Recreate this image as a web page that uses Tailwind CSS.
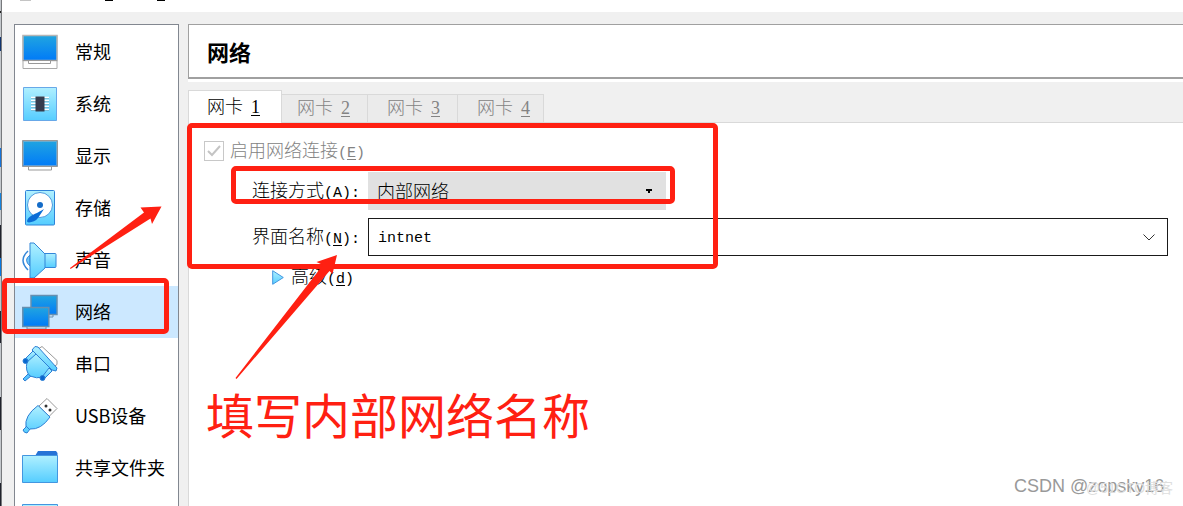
<!DOCTYPE html>
<html lang="zh-CN">
<head>
    <meta charset="UTF-8">
    <meta name="viewport" content="width=device-width, initial-scale=1.0">
    <title>网络</title>
    <script src="https://cdn.jsdelivr.net/npm/@tailwindcss/browser@4"></script>
</head>
<body class="relative h-screen overflow-hidden bg-[#f0f0f0] font-['Noto_Sans_CJK_SC',sans-serif] text-lg text-black">
    <svg class="absolute size-0" aria-hidden="true">
        <defs>
            <linearGradient id="screen" x1="0" y1="0" x2="0" y2="1"><stop offset="0" stop-color="#21a5e0"/><stop offset="1" stop-color="#007af8"/></linearGradient>
            <linearGradient id="light" x1="0" y1="0" x2="0" y2="1"><stop offset="0" stop-color="#b0f0ff"/><stop offset="1" stop-color="#55cdff"/></linearGradient>
        </defs>
    </svg>

    <div class="flex h-full">
        <!-- Desktop behind the window -->
        <div class="flex w-[2px] shrink-0 flex-col border-r border-[#77797c] bg-[#c4c8cc]">
            <div class="mt-[11px] h-[2px] bg-[#222]"></div>
            <div class="mt-[24px] h-[14px] bg-[#12356f]"></div>
            <div class="mt-[97px] h-[19px] bg-[#1673d8]"></div>
            <div class="mt-[26px] h-[17px] bg-[#1683dc]"></div>
            <div class="mt-[15px] h-[33px] bg-[#20222c]"></div>
            <div class="h-[18px] bg-[#0878e0]"></div>
            <div class="mt-[35px] h-[32px] bg-[#20222c]"></div>
            <div class="mt-[54px] h-[33px] bg-[#20222c]"></div>
            <div class="mt-[53px] grow bg-[#20222c]"></div>
        </div>

        <div class="flex min-w-0 flex-1 flex-col">
            <!-- Title bar -->
            <header class="flex h-[12px] shrink-0 items-start bg-white">
                <div class="ml-[18px] h-px w-[11px] bg-[#c4c4c4]"></div>
                <div class="ml-[74px] h-px w-[8px] bg-black"></div>
                <div class="ml-[44px] h-px w-[8px] bg-black"></div>
            </header>

            <div class="flex min-h-0 flex-1 pt-[12px] pl-[12px]">
                <!-- Categories -->
                <nav class="w-[165px] shrink-0 overflow-hidden border border-b-0 border-[#828790] bg-white pt-px">
                    <a href="#" class="flex h-[52px] items-center gap-[17px] pl-[7px]">
                        <svg class="size-[36px] shrink-0" viewBox="0 0 36 36"><path d="M1 1.500h34v33H1z" fill="#fff" stroke="#aaa"/><path d="M1 1.500h34v25H1z" fill="url(#screen)" stroke="#b5b5b5" stroke-width="1.500"/><path d="M1 26.500h34M6.500 27v2.500h22V27" fill="#fff" stroke="#999"/></svg>
                        <span class="pb-[3px]">常规</span>
                    </a>
                    <a href="#" class="flex h-[52px] items-center gap-[17px] pl-[7px]">
                        <svg class="size-[36px] shrink-0" viewBox="0 0 36 36"><path d="M1.500 1.500h33v33h-33z" fill="url(#light)" stroke="#68a8e8"/><path d="M9 11.500h18M9 14.500h18M9 17.500h18M9 20.500h18M9 23.500h18" stroke="#fff" stroke-width="1.500"/><path d="M9 12.500h18M9 15.500h18M9 18.500h18M9 21.500h18M9 24.500h18" stroke="#68a5bb" stroke-width=".6"/><path d="M13.500 10.500h9v15h-9z" fill="#353c4d"/></svg>
                        <span class="pb-[3px]">系统</span>
                    </a>
                    <a href="#" class="flex h-[52px] items-center gap-[17px] pl-[7px]">
                        <svg class="size-[36px] shrink-0" viewBox="0 0 36 36"><path d="M6.500 28.500v3.500h23v-3.500" fill="#fff" stroke="#999"/><path d="M.5 2.500h35v26H.5z" fill="url(#screen)" stroke="#999"/><path d="M1.500 3.500h33v24h-33z" fill="none" stroke="#9ab4c4" stroke-width=".6"/></svg>
                        <span class="pb-[3px]">显示</span>
                    </a>
                    <a href="#" class="flex h-[52px] items-center gap-[17px] pl-[7px]">
                        <svg class="size-[36px] shrink-0" viewBox="0 0 36 36"><rect x="3.500" y=".5" width="29" height="34.500" rx="1" fill="url(#light)" stroke="#2d83d8"/><circle cx="18" cy="15" r="12.500" fill="#fff" stroke="#4d9ade"/><path d="M22 19 16 28c-2 3-6 4-9 4.500-3 0-2-3 0-5 3-3 8-4 15-8.500z" fill="#0b6dd6"/><circle cx="18" cy="15" r="3" fill="#146cc8"/></svg>
                        <span class="pb-[3px]">存储</span>
                    </a>
                    <a href="#" class="flex h-[52px] items-center gap-[17px] pl-[7px]">
                        <svg class="size-[36px] shrink-0" viewBox="0 0 36 36" stroke="#3386d8"><path d="M6 9q-10 9 0 19" fill="none" stroke-width="1.500"/><path d="M8 13q-7 5 0 11z" fill="#6fc6f8"/><path d="M22 11.500h11q1 0 1 1v12q0 1-1 1H22z" fill="url(#light)"/><path d="M8 1h4l11 11v14L12 36H8z" fill="url(#light)"/></svg>
                        <span class="pb-[3px]">声音</span>
                    </a>
                    <a href="#" class="flex h-[52px] items-center gap-[17px] bg-[#cce8ff] pl-[7px]" aria-current="page">
                        <svg class="size-[36px] shrink-0" viewBox="0 0 36 36" stroke="#668fb0"><path d="M18 20v3h13v-3" fill="#d8e8f6"/><path d="M9 1.500h26v19H9z" fill="url(#screen)" stroke-width="1.500"/><path d="M5 32v3h19v-3" fill="#d8e8f6"/><path d="M.8 13.500h26v19H.8z" fill="url(#screen)" stroke-width="1.500"/></svg>
                        <span class="pb-[3px]">网络</span>
                    </a>
                    <a href="#" class="flex h-[52px] items-center gap-[17px] pl-[7px]">
                        <svg class="size-[36px] shrink-0" viewBox="0 0 36 36" stroke="#2d80d5" stroke-linejoin="round"><path d="m16 3 4-2.500 15 14v4l-3 2z" fill="#fff" stroke="#999"/><path d="m7 27-6 6 2 2 6-5z" fill="#55c2ff"/><path d="m14 7 16 16-8 8q-8 2-14-1-5-5-3-14z" fill="url(#light)"/><path d="m10 4 3-3.500 3 .5 19 21-1 3-4-1z" fill="url(#light)"/><path d="m11 5 3 3-10 9-3-2z" fill="url(#light)"/><path d="m27 22 3 3-8 8-2-2z" fill="url(#light)"/><circle cx="3.500" cy="15" r="2.500" fill="#0867ce"/><circle cx="20.500" cy="32" r="2.500" fill="#0867ce"/></svg>
                        <span class="pb-[3px]">串口</span>
                    </a>
                    <a href="#" class="flex h-[52px] items-center gap-[17px] pl-[7px]">
                        <svg class="size-[36px] shrink-0" viewBox="0 0 36 36"><path d="m17 8 8-7.500 10 10-8 8z" fill="#fff" stroke="#999"/><circle cx="24" cy="8" r="1.500" fill="#333"/><circle cx="28" cy="12" r="1.500" fill="#333"/><path d="M16 7.500 28 19q-9 13-20 12l-3 4q-3 0-4-3l3-3Q2 18 16 7.500z" fill="url(#light)" stroke="#2d80d5"/><path d="m4 28 4 4" stroke="#2d80d5"/></svg>
                        <span class="pb-[3px]">USB设备</span>
                    </a>
                    <a href="#" class="flex h-[52px] items-center gap-[17px] pl-[7px]">
                        <svg class="size-[36px] shrink-0" viewBox="0 0 36 36"><path d="m13 6 3-5h18l1.500 2v4H13z" fill="#2673d6"/><path d="M.5 5.500h35v27H.5z" fill="url(#light)" stroke="#4396e0"/></svg>
                        <span class="pb-[3px]">共享文件夹</span>
                    </a>
                    <a href="#" class="flex h-[52px] items-center pl-[7px]" aria-label="用户界面">
                        <svg class="size-[36px] shrink-0" viewBox="0 0 36 36"><path d="M.5 2.500h35v30H.5z" fill="url(#light)" stroke="#4396e0"/></svg>
                    </a>
                </nav>

                <!-- Settings page -->
                <main class="ml-[9px] flex min-w-0 flex-1 flex-col font-light">
                    <div class="shrink-0 bg-white pb-[3px]">
                        <h1 class="flex h-[55px] items-center border-y border-b-2 border-l border-[#a0a0a0] pl-[18px] text-[22px] font-bold">网络</h1>
                    </div>

                    <div class="mt-[8px] flex shrink-0 items-end leading-5" role="tablist">
                        <button role="tab" aria-selected="true" class="z-10 -mb-px h-[33px] w-[94px] border border-b-0 border-[#d9d9d9] bg-white pb-[2px] pl-[18px] text-left">网卡 <span class="ml-1 font-['Liberation_Serif',serif] underline underline-offset-2">1</span></button>
                        <button role="tab" class="-ml-[4px] h-[28px] w-[90px] border-t border-r border-[#d9d9d9] bg-[#ebebeb] pb-[3px] pl-[19px] text-left text-[#838383]">网卡 <span class="ml-1 font-['Liberation_Serif',serif] underline underline-offset-2">2</span></button>
                        <button role="tab" class="h-[28px] w-[90px] border-t border-r border-[#d9d9d9] bg-[#ebebeb] pb-[3px] pl-[19px] text-left text-[#838383]">网卡 <span class="ml-1 font-['Liberation_Serif',serif] underline underline-offset-2">3</span></button>
                        <button role="tab" class="h-[28px] w-[86px] border-t border-r border-[#d9d9d9] bg-[#ebebeb] pb-[3px] pl-[19px] text-left text-[#838383]">网卡 <span class="ml-1 font-['Liberation_Serif',serif] underline underline-offset-2">4</span></button>
                    </div>

                    <section class="flex-1 border-t border-l border-[#d9d9d9] bg-white pt-[13px] pr-[15px] pl-[15px]">
                        <label class="flex h-[30px] items-center gap-[6px] text-[#838383]">
                            <span class="grid size-[20px] place-items-center">
                                <input type="checkbox" checked disabled class="col-start-1 row-start-1 size-[20px] appearance-none border border-[#c8c8c8] bg-white">
                                <svg class="col-start-1 row-start-1 h-[12px] w-[14px]" viewBox="0 0 14 12" fill="none" stroke="#c4c4c4" stroke-width="2"><path d="m1 6 4 4 8-9"/></svg>
                            </span>
                            <span class="leading-[30px]">启用网络连接<span class="font-['Liberation_Mono',monospace] text-[15px]">(<u class="underline-offset-2">E</u>)</span></span>
                        </label>
                        <div class="mt-[6px] flex items-center pl-[48px]">
                            <label for="attach" class="w-[116px] shrink-0 pb-[2px]">连接方式<span class="font-['Liberation_Mono',monospace] text-[15px]">(<u class="underline-offset-2">A</u>):</span></label>
                            <div class="grid w-[298px] items-center">
                                <select id="attach" class="col-start-1 row-start-1 h-[38px] appearance-none bg-[#e1e1e1] pb-[3px] pl-[9px]">
                                    <option>内部网络</option>
                                </select>
                                <svg class="pointer-events-none col-start-1 row-start-1 mr-[14px] h-[4px] w-[6px] justify-self-end" viewBox="0 0 6 4"><path d="M0 0h6v2H4v2H2V2H0z"/></svg>
                            </div>
                        </div>
                        <div class="mt-[8px] flex items-center pl-[48px]">
                            <label for="name" class="w-[116px] shrink-0 pb-[2px]">界面名称<span class="font-['Liberation_Mono',monospace] text-[15px]">(<u class="underline-offset-2">N</u>):</span></label>
                            <div class="flex h-[38px] flex-1 items-center border border-[#1a1a1a]">
                                <input id="name" type="text" value="intnet" class="min-w-0 flex-1 pt-[3px] pl-[9px] font-['Liberation_Mono',monospace] text-[15px] outline-none">
                                <button class="mr-[12px]" aria-label="展开"><svg class="h-[7px] w-[12px]" viewBox="0 0 12 7" fill="none" stroke="#333"><path d="m.5.5 5.500 5.500L11.500.5"/></svg></button>
                            </div>
                        </div>
                        <button class="mt-[5px] ml-[68px] flex items-center gap-[7px]">
                            <svg class="h-[15px] w-[12px]" viewBox="0 0 12 15"><path d="M.7.7v13.600L11.300 7.500z" fill="url(#light)" stroke="#4296e0"/></svg>
                            <span class="pb-[3px]">高级<span class="font-['Liberation_Mono',monospace] text-[15px]">(<u class="underline-offset-2">d</u>)</span></span>
                        </button>
                    </section>
                </main>
            </div>
        </div>
    </div>

    <!-- Red markup over the dialog -->
    <div class="pointer-events-none absolute inset-0 z-20 overflow-hidden text-[#ff2012]">
        <div class="absolute top-[123px] left-[187px] h-[146px] w-[531px] rounded-[5px] border-5"></div>
        <div class="absolute top-[166px] left-[231px] h-[38px] w-[444px] rounded-[5px] border-5"></div>
        <div class="absolute top-[278px] left-[2px] h-[56px] w-[167px] rounded-[5px] border-5"></div>
        <svg class="absolute top-0 left-0 h-[400px] w-[400px]" viewBox="0 0 400 400" fill="currentColor">
            <path d="M70 268 144 212.500 140.500 207.500 161.500 206.500 152 224 150.500 218.500 70.500 269z"/>
            <path d="M235.500 378 323 265 316.500 262 337 255 332.500 274 329.500 271 236.500 379z"/>
        </svg>
        <p class="absolute top-[377px] left-[206px] text-5xl leading-[72px]">填写内部网络名称</p>
        <p class="absolute top-[472px] left-[1014px] font-['Liberation_Sans',sans-serif] text-lg text-[#999]">CSDN @zopsky16</p>
        <p class="absolute top-[478px] left-[1086px] font-['Liberation_Sans','Noto_Sans_CJK_SC',sans-serif] text-sm text-[#dedede]">@51CTO博客</p>
    </div>
</body>
</html>
